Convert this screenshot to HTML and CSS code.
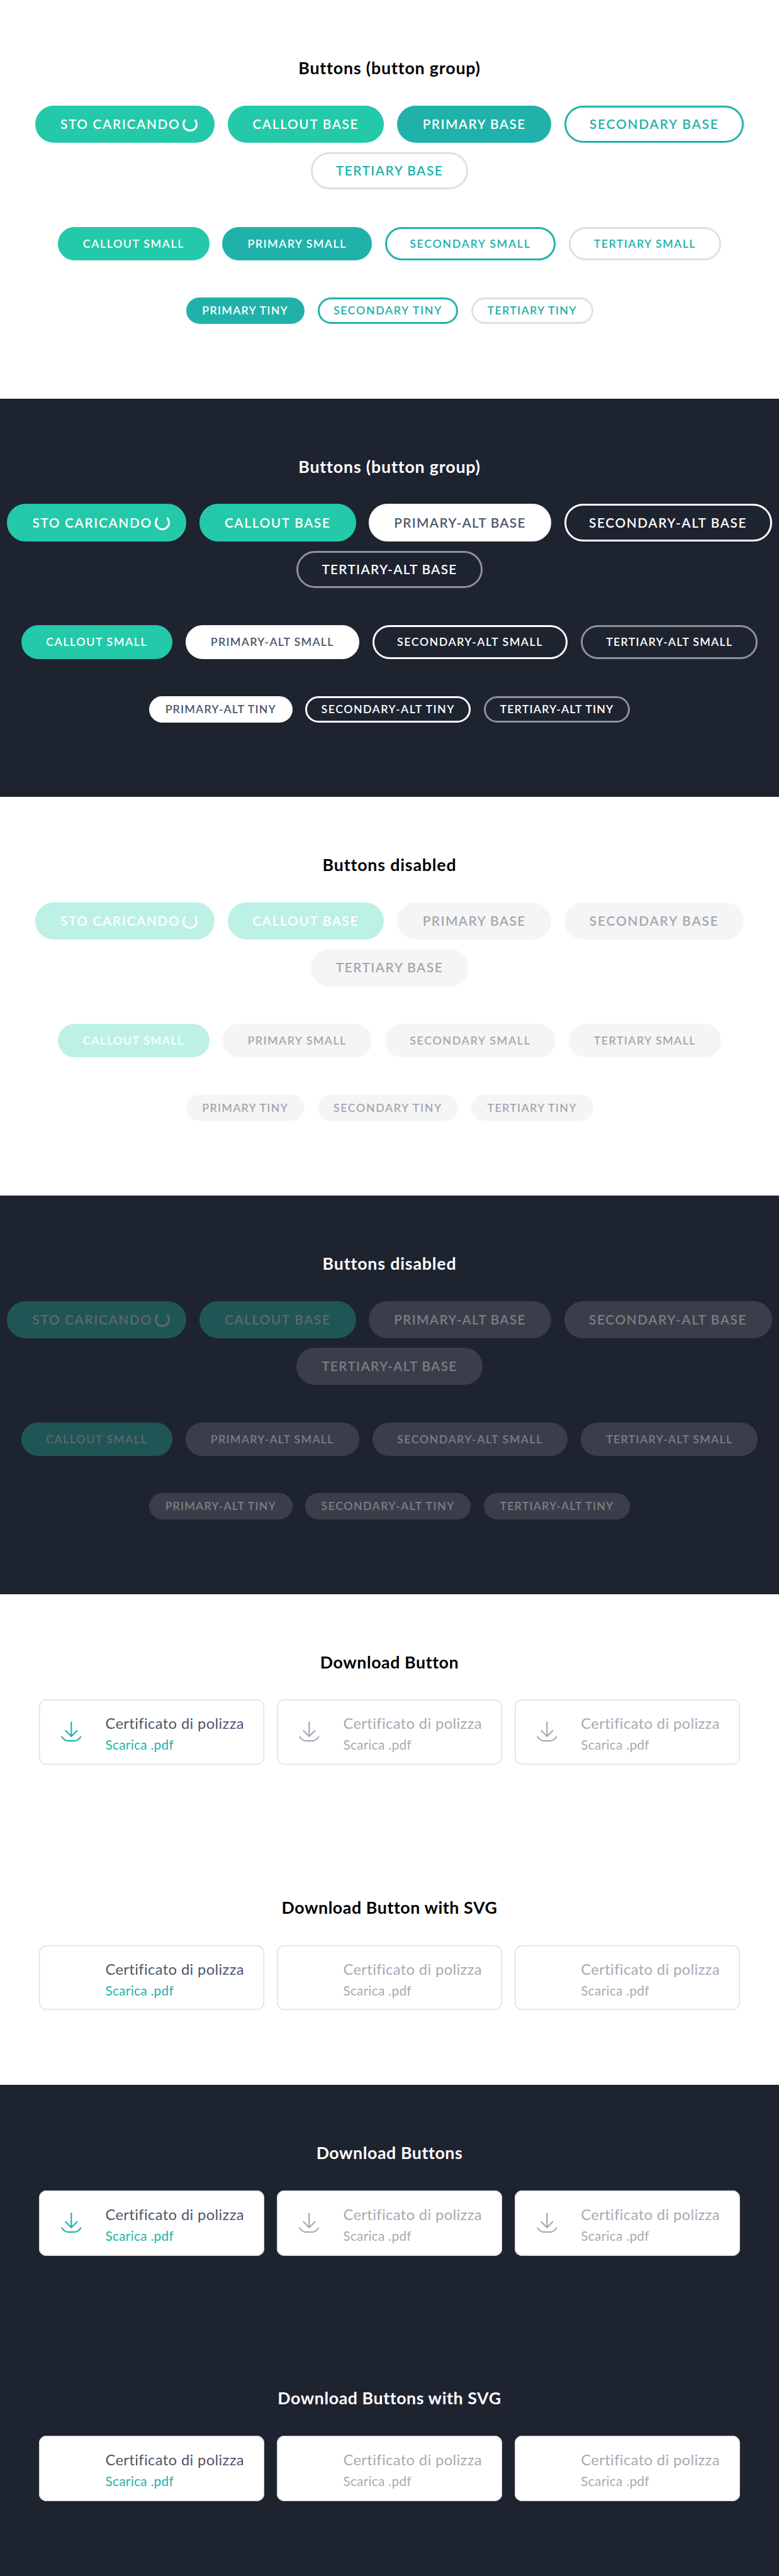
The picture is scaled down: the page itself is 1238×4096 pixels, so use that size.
FILE: index.html
```html
<!DOCTYPE html>
<html lang="it">
<head>
<meta charset="utf-8">
<title>Buttons</title>
<link rel="stylesheet" href="styles.css">
</head>
<body>
<svg width="0" height="0" class="sprite" aria-hidden="true">
  <symbol id="download" viewBox="0 0 44 44">
    <path d="M22 2v30M9.7 20 22 32.3 34.3 20M1.6 33.2C6 39 9.500 42 15 42H29C34.500 42 38 39 42.400 33.200" fill="none" stroke="currentColor" stroke-width="3" stroke-linecap="round" stroke-linejoin="round"/>
  </symbol>
</svg>

<section class="section">
  <h2 class="title title-wide">Buttons (button group)</h2>
  <div class="row">
    <button class="btn base callout loading">STO CARICANDO<span class="spinner"></span></button>
    <button class="btn base callout">CALLOUT BASE</button>
    <button class="btn base primary">PRIMARY BASE</button>
    <button class="btn base secondary">SECONDARY BASE</button>
    <button class="btn base tertiary">TERTIARY BASE</button>
  </div>
  <div class="row">
    <button class="btn small callout">CALLOUT SMALL</button>
    <button class="btn small primary">PRIMARY SMALL</button>
    <button class="btn small secondary">SECONDARY SMALL</button>
    <button class="btn small tertiary">TERTIARY SMALL</button>
  </div>
  <div class="row">
    <button class="btn tiny primary">PRIMARY TINY</button>
    <button class="btn tiny secondary">SECONDARY TINY</button>
    <button class="btn tiny tertiary">TERTIARY TINY</button>
  </div>
</section>

<section class="section dark">
  <h2 class="title title-wide">Buttons (button group)</h2>
  <div class="row">
    <button class="btn base callout loading">STO CARICANDO<span class="spinner"></span></button>
    <button class="btn base callout">CALLOUT BASE</button>
    <button class="btn base primary-alt">PRIMARY-ALT BASE</button>
    <button class="btn base secondary-alt">SECONDARY-ALT BASE</button>
    <button class="btn base tertiary-alt">TERTIARY-ALT BASE</button>
  </div>
  <div class="row">
    <button class="btn small callout">CALLOUT SMALL</button>
    <button class="btn small primary-alt">PRIMARY-ALT SMALL</button>
    <button class="btn small secondary-alt">SECONDARY-ALT SMALL</button>
    <button class="btn small tertiary-alt">TERTIARY-ALT SMALL</button>
  </div>
  <div class="row">
    <button class="btn tiny primary-alt">PRIMARY-ALT TINY</button>
    <button class="btn tiny secondary-alt">SECONDARY-ALT TINY</button>
    <button class="btn tiny tertiary-alt">TERTIARY-ALT TINY</button>
  </div>
</section>

<section class="section">
  <h2 class="title title-wide">Buttons disabled</h2>
  <div class="row">
    <button class="btn base callout loading" disabled>STO CARICANDO<span class="spinner"></span></button>
    <button class="btn base callout" disabled>CALLOUT BASE</button>
    <button class="btn base primary" disabled>PRIMARY BASE</button>
    <button class="btn base secondary" disabled>SECONDARY BASE</button>
    <button class="btn base tertiary" disabled>TERTIARY BASE</button>
  </div>
  <div class="row">
    <button class="btn small callout" disabled>CALLOUT SMALL</button>
    <button class="btn small primary" disabled>PRIMARY SMALL</button>
    <button class="btn small secondary" disabled>SECONDARY SMALL</button>
    <button class="btn small tertiary" disabled>TERTIARY SMALL</button>
  </div>
  <div class="row">
    <button class="btn tiny primary" disabled>PRIMARY TINY</button>
    <button class="btn tiny secondary" disabled>SECONDARY TINY</button>
    <button class="btn tiny tertiary" disabled>TERTIARY TINY</button>
  </div>
</section>

<section class="section dark">
  <h2 class="title title-wide">Buttons disabled</h2>
  <div class="row">
    <button class="btn base callout loading" disabled>STO CARICANDO<span class="spinner"></span></button>
    <button class="btn base callout" disabled>CALLOUT BASE</button>
    <button class="btn base primary-alt" disabled>PRIMARY-ALT BASE</button>
    <button class="btn base secondary-alt" disabled>SECONDARY-ALT BASE</button>
    <button class="btn base tertiary-alt" disabled>TERTIARY-ALT BASE</button>
  </div>
  <div class="row">
    <button class="btn small callout" disabled>CALLOUT SMALL</button>
    <button class="btn small primary-alt" disabled>PRIMARY-ALT SMALL</button>
    <button class="btn small secondary-alt" disabled>SECONDARY-ALT SMALL</button>
    <button class="btn small tertiary-alt" disabled>TERTIARY-ALT SMALL</button>
  </div>
  <div class="row">
    <button class="btn tiny primary-alt" disabled>PRIMARY-ALT TINY</button>
    <button class="btn tiny secondary-alt" disabled>SECONDARY-ALT TINY</button>
    <button class="btn tiny tertiary-alt" disabled>TERTIARY-ALT TINY</button>
  </div>
</section>

<section class="section">
  <h2 class="title">Download Button</h2>
  <div class="cards">
    <a class="card"><svg class="icon"><use href="#download"/></svg><span class="text"><span class="name">Certificato di polizza</span><span class="action">Scarica .pdf</span></span></a>
    <a class="card off"><svg class="icon"><use href="#download"/></svg><span class="text"><span class="name">Certificato di polizza</span><span class="action">Scarica .pdf</span></span></a>
    <a class="card off"><svg class="icon"><use href="#download"/></svg><span class="text"><span class="name">Certificato di polizza</span><span class="action">Scarica .pdf</span></span></a>
  </div>
</section>
<section class="section">
  <h2 class="title">Download Button with SVG</h2>
  <div class="cards">
    <a class="card"><svg class="icon"></svg><span class="text"><span class="name">Certificato di polizza</span><span class="action">Scarica .pdf</span></span></a>
    <a class="card off"><svg class="icon"></svg><span class="text"><span class="name">Certificato di polizza</span><span class="action">Scarica .pdf</span></span></a>
    <a class="card off"><svg class="icon"></svg><span class="text"><span class="name">Certificato di polizza</span><span class="action">Scarica .pdf</span></span></a>
  </div>
</section>

<section class="section dark">
  <h2 class="title">Download Buttons</h2>
  <div class="cards">
    <a class="card"><svg class="icon"><use href="#download"/></svg><span class="text"><span class="name">Certificato di polizza</span><span class="action">Scarica .pdf</span></span></a>
    <a class="card off"><svg class="icon"><use href="#download"/></svg><span class="text"><span class="name">Certificato di polizza</span><span class="action">Scarica .pdf</span></span></a>
    <a class="card off"><svg class="icon"><use href="#download"/></svg><span class="text"><span class="name">Certificato di polizza</span><span class="action">Scarica .pdf</span></span></a>
  </div>
</section>
<section class="section dark">
  <h2 class="title">Download Buttons with SVG</h2>
  <div class="cards">
    <a class="card"><svg class="icon"></svg><span class="text"><span class="name">Certificato di polizza</span><span class="action">Scarica .pdf</span></span></a>
    <a class="card off"><svg class="icon"></svg><span class="text"><span class="name">Certificato di polizza</span><span class="action">Scarica .pdf</span></span></a>
    <a class="card off"><svg class="icon"></svg><span class="text"><span class="name">Certificato di polizza</span><span class="action">Scarica .pdf</span></span></a>
  </div>
</section>
</body>
</html>
```

FILE: styles.css
```css
html { font-size: 7.4203px; }
* { box-sizing: border-box; }
body {
  margin: 0;
  background: #fff;
  font-family: Lato, "Open Sans", sans-serif;
  font-size: 2.8rem;
}
.sprite { display: none; }

/* Sections */
.section {
  display: flex;
  flex-direction: column;
  align-items: center;
  padding: 12.4rem 0 16rem;
  color: #000;
}
.dark { background: #1e2330; color: #fff; }
.title {
  margin: 0 0 5.8rem;
  font-size: 3.6rem;
  line-height: 4.4rem;
  font-weight: 700;
  letter-spacing: .08rem;
}
.title-wide { letter-spacing: .115rem; }
.row {
  display: flex;
  flex-wrap: wrap;
  justify-content: center;
  gap: 2rem 2.8rem;
  width: 100%;
}
.row + .row { margin-top: 8rem; }

/* Buttons */
.btn {
  display: flex;
  flex: none;
  align-items: center;
  justify-content: center;
  margin: 0;
  padding: 0;
  border: 3px solid transparent;
  border-radius: 4rem;
  background: transparent;
  font-family: inherit;
  font-weight: 600;
  line-height: 1.2;
  white-space: nowrap;
}
.base { height: 8rem; font-size: 2.8rem; }
.small { height: 7.2rem; font-size: 2.4rem; }
.tiny { height: 5.6rem; font-size: 2.4rem; }

.callout { background: #24c9aa; border-color: #24c9aa; color: #fff; }
.primary { background: #20b2aa; border-color: #20b2aa; color: #fff; }
.secondary { border-color: #20b2aa; color: #20b2aa; }
.tertiary { border-color: #e0e0e0; color: #20b2aa; }
.primary-alt { background: #fff; border-color: #fff; color: #4c586a; }
.secondary-alt { border-color: #fff; color: #fff; }
.tertiary-alt { border-color: #8e9197; color: #fff; }

.btn:disabled { background: #f5f5f5; border-color: #f5f5f5; color: #a2a8b1; }
.callout:disabled { background: #bdf1e6; border-color: #bdf1e6; color: #fff; }
.dark .btn:disabled { background: #3b3e4a; border-color: #3b3e4a; color: #7b7e84; }
.dark .callout:disabled { background: #1f5655; border-color: #1f5655; color: #62656f; }

.base.callout { width: 33.5rem; letter-spacing: .225rem; }
.base.callout.loading {
  width: 38.4rem;
  justify-content: space-between;
  padding: 0 3.2rem 0 5rem;
}
.base.primary { width: 33.1rem; letter-spacing: .195rem; }
.base.secondary { width: 38.4rem; letter-spacing: .25rem; }
.base.tertiary { width: 33.8rem; letter-spacing: .205rem; }
.base.primary-alt { width: 39rem; letter-spacing: .175rem; }
.base.secondary-alt { width: 44.5rem; letter-spacing: .22rem; }
.base.tertiary-alt { width: 39.8rem; letter-spacing: .178rem; }

.small.callout { width: 32.4rem; letter-spacing: .21rem; }
.small.primary { width: 32rem; letter-spacing: .188rem; }
.small.secondary { width: 36.6rem; letter-spacing: .225rem; }
.small.tertiary { width: 32.6rem; letter-spacing: .188rem; }
.small.primary-alt { width: 37.2rem; letter-spacing: .165rem; }
.small.secondary-alt { width: 41.9rem; letter-spacing: .202rem; }
.small.tertiary-alt { width: 37.9rem; letter-spacing: .17rem; }

.tiny.primary { width: 25.4rem; letter-spacing: .165rem; }
.tiny.secondary { width: 30.1rem; letter-spacing: .215rem; }
.tiny.tertiary { width: 26.1rem; letter-spacing: .17rem; }
.tiny.primary-alt { width: 30.7rem; letter-spacing: .152rem; }
.tiny.secondary-alt { width: 35.4rem; letter-spacing: .192rem; }
.tiny.tertiary-alt { width: 31.3rem; letter-spacing: .152rem; }

.spinner {
  width: 3.2rem;
  height: 3.2rem;
  border: 3px solid currentColor;
  border-top-color: transparent;
  border-radius: 50%;
}

/* Download cards */
.cards {
  display: grid;
  grid-template-columns: repeat(3, 1fr);
  gap: 2.8rem;
  width: 150rem;
}
.card {
  display: flex;
  align-items: flex-start;
  height: 14rem;
  padding: 2.7rem 0 0 4.7rem;
  border-radius: 1.6rem;
  background: #fff;
  box-shadow: inset 0 0 0 .2rem #e0e0e0;
  color: #20b2aa;
}
.icon { width: 4.4rem; height: 4.4rem; margin: 2.05rem 5.05rem 0 0; flex: none; }
.text { display: flex; flex-direction: column; white-space: nowrap; }
.name {
  color: #4c586a;
  font-size: 3.2rem;
  line-height: 5rem;
  letter-spacing: .05rem;
}
.action { font-size: 2.8rem; line-height: 4.1rem; letter-spacing: .04rem; }
.off, .off .name { color: #a5abb4; }
```
